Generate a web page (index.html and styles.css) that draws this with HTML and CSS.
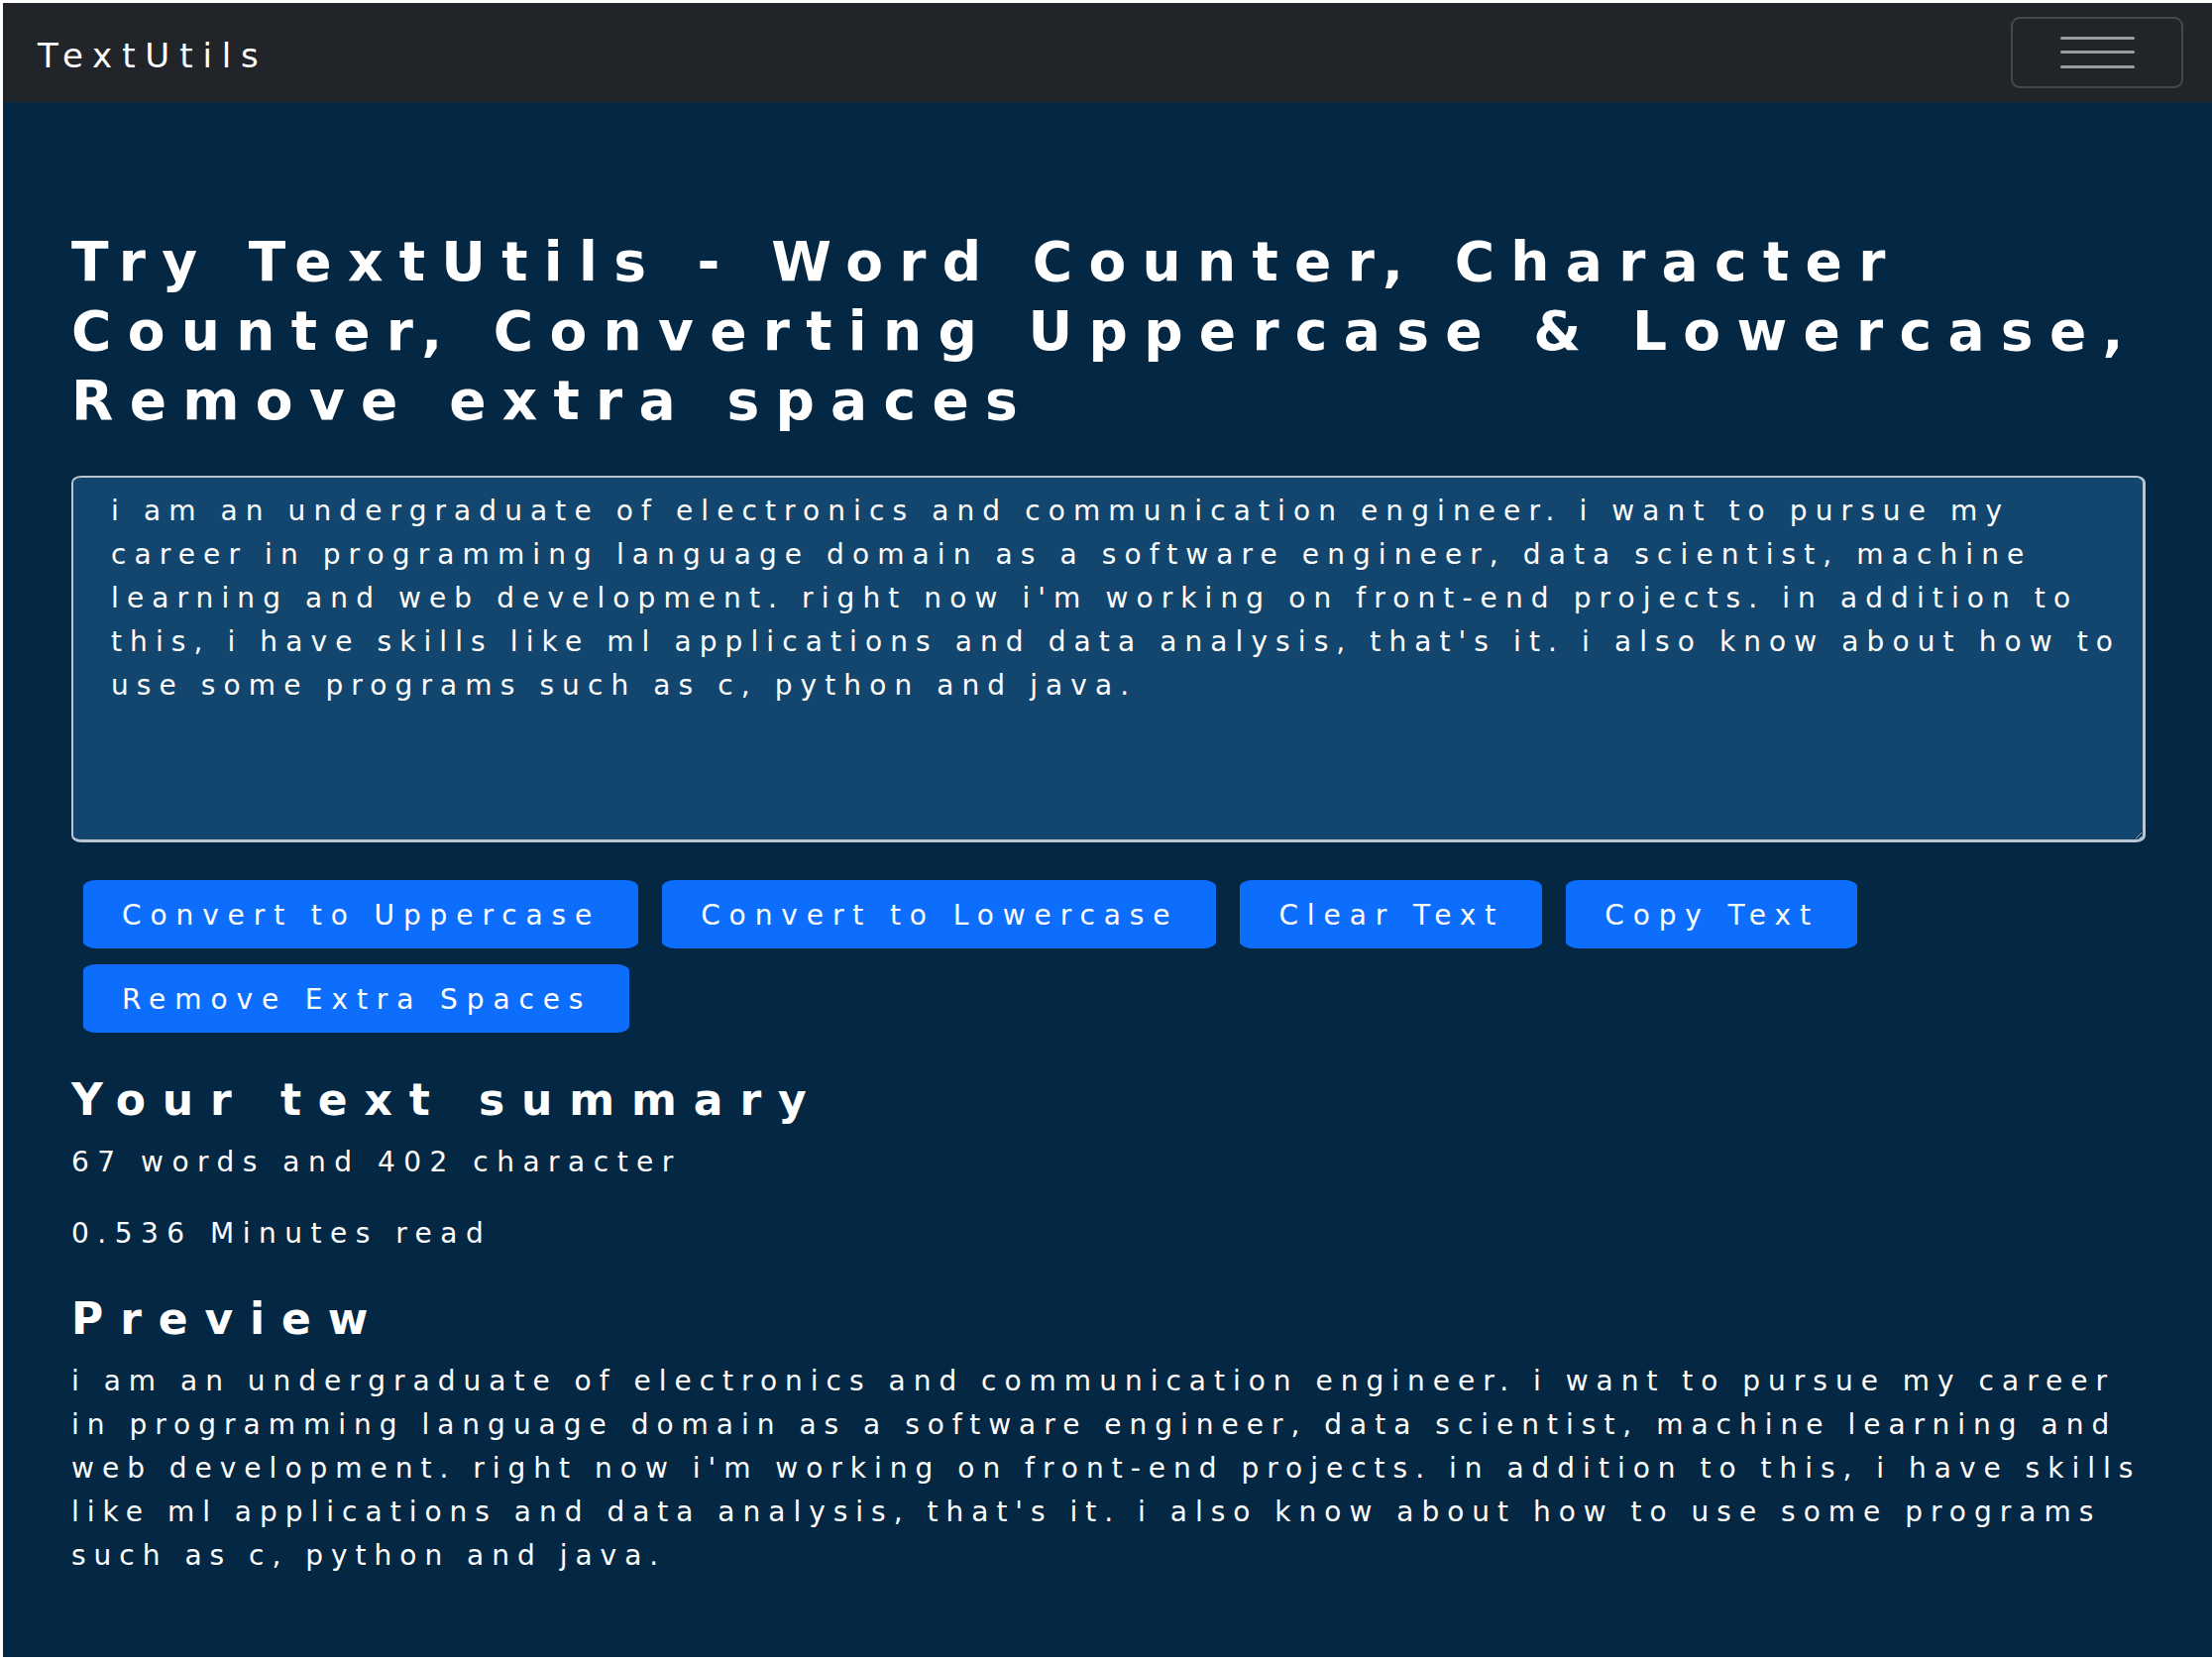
FILE: index.html
```html
<!DOCTYPE html>
<html lang="en">
<head>
<meta charset="utf-8">
<title>TextUtils</title>
<link rel="stylesheet" href="styles.css">
</head>
<body>
<div class="app">
  <nav class="navbar">
    <a class="brand" href="#">TextUtils</a>
    <button class="toggler" type="button" aria-label="Toggle navigation">
      <svg class="toggler-icon" viewBox="0 0 75 32" width="75" height="32" aria-hidden="true"><path d="M1.5 1.5h72M1.5 15.5h72M1.5 30.5h72" stroke="#9b9c9e" stroke-width="3" stroke-linecap="round" fill="none"/></svg>
    </button>
  </nav>
  <main class="main">
    <h1 class="title">Try TextUtils - Word Counter, Character<br>Counter, Converting Uppercase &amp; Lowercase,<br>Remove extra spaces</h1>
    <textarea class="editor" id="myBox" rows="8">i am an undergraduate of electronics and communication engineer. i want to pursue my career in programming language domain as a software engineer, data scientist, machine learning and web development. right now i'm working on front-end projects. in addition to this, i have skills like ml applications and data analysis, that's it. i also know about how to use some programs such as c, python and java.</textarea>
    <div class="actions">
      <button class="btn" type="button">Convert to Uppercase</button>
      <button class="btn" type="button">Convert to Lowercase</button>
      <button class="btn" type="button">Clear Text</button>
      <button class="btn" type="button">Copy Text</button>
      <button class="btn" type="button">Remove Extra Spaces</button>
    </div>
    <h2 class="section-title summary-title">Your text summary</h2>
    <p class="stat">67 words and 402 character</p>
    <p class="stat">0.536 Minutes read</p>
    <h2 class="section-title preview-title">Preview</h2>
    <p class="preview">i am an undergraduate of electronics and communication engineer. i want to pursue my career in programming language domain as a software engineer, data scientist, machine learning and web development. right now i'm working on front-end projects. in addition to this, i have skills like ml applications and data analysis, that's it. i also know about how to use some programs such as c, python and java.</p>
  </main>
</div>
</body>
</html>
```

FILE: styles.css
```css
* {
  box-sizing: border-box;
}

html, body {
  margin: 0;
}

body {
  padding: 3px 0 4px 3px;
  background: #ffffff;
  font-family: "DejaVu Sans", "Open Sans", sans-serif;
  color: #ffffff;
}

.app {
  min-height: calc(100vh - 7px);
  display: flex;
  flex-direction: column;
  background: #042743;
}

.navbar {
  height: 100px;
  display: flex;
  align-items: center;
  justify-content: space-between;
  padding: 0 29px 0 35px;
  background: #212529;
}

.brand {
  padding-top: 6px;
  font-size: 34px;
  line-height: 40px;
  letter-spacing: 9.9px;
  color: #ffffff;
  text-decoration: none;
}

.toggler {
  width: 174px;
  height: 72px;
  display: flex;
  align-items: center;
  justify-content: center;
  padding: 0;
  background: transparent;
  border: 2px solid #45484c;
  border-radius: 9px;
}

.toggler-icon {
  display: block;
}

.main {
  flex: 1;
  padding: 126px 67px 0 69px;
}

.title {
  margin: 0 0 41px;
  font-size: 55px;
  line-height: 70px;
  font-weight: 700;
  letter-spacing: 16.3px;
  white-space: nowrap;
}

.editor {
  display: block;
  width: 100%;
  height: 370px;
  margin: 0;
  padding: 12px 2px 0 38px;
  font-family: inherit;
  font-size: 28px;
  line-height: 44px;
  letter-spacing: 8.1px;
  color: #ffffff;
  background: #13466e;
  border: 2px solid #b8c6d4;
  border-right-width: 3px;
  border-bottom-width: 3px;
  border-radius: 10px / 7px;
  outline: none;
}

.actions {
  display: flex;
  flex-wrap: wrap;
  gap: 16px 24px;
  margin: 38px 0 0 12px;
}

.btn {
  padding: 13px 37px 10px 38px;
  font-family: inherit;
  font-size: 28px;
  line-height: 44px;
  letter-spacing: 8.9px;
  color: #ffffff;
  background: #0d6efd;
  border: 1px solid #0d6efd;
  border-radius: 13px / 7px;
}

.section-title {
  margin: 0 0 15px;
  font-size: 44px;
  line-height: 53px;
  font-weight: 700;
  letter-spacing: 16.9px;
}

.summary-title {
  margin-top: 41px;
}

.preview-title {
  margin-top: 37px;
}

.stat {
  margin: 0 0 28px;
  font-size: 28px;
  line-height: 44px;
  letter-spacing: 8.5px;
}

.preview {
  margin: 0 -17px 0 0;
  font-size: 28px;
  line-height: 44px;
  letter-spacing: 8px;
}
```
